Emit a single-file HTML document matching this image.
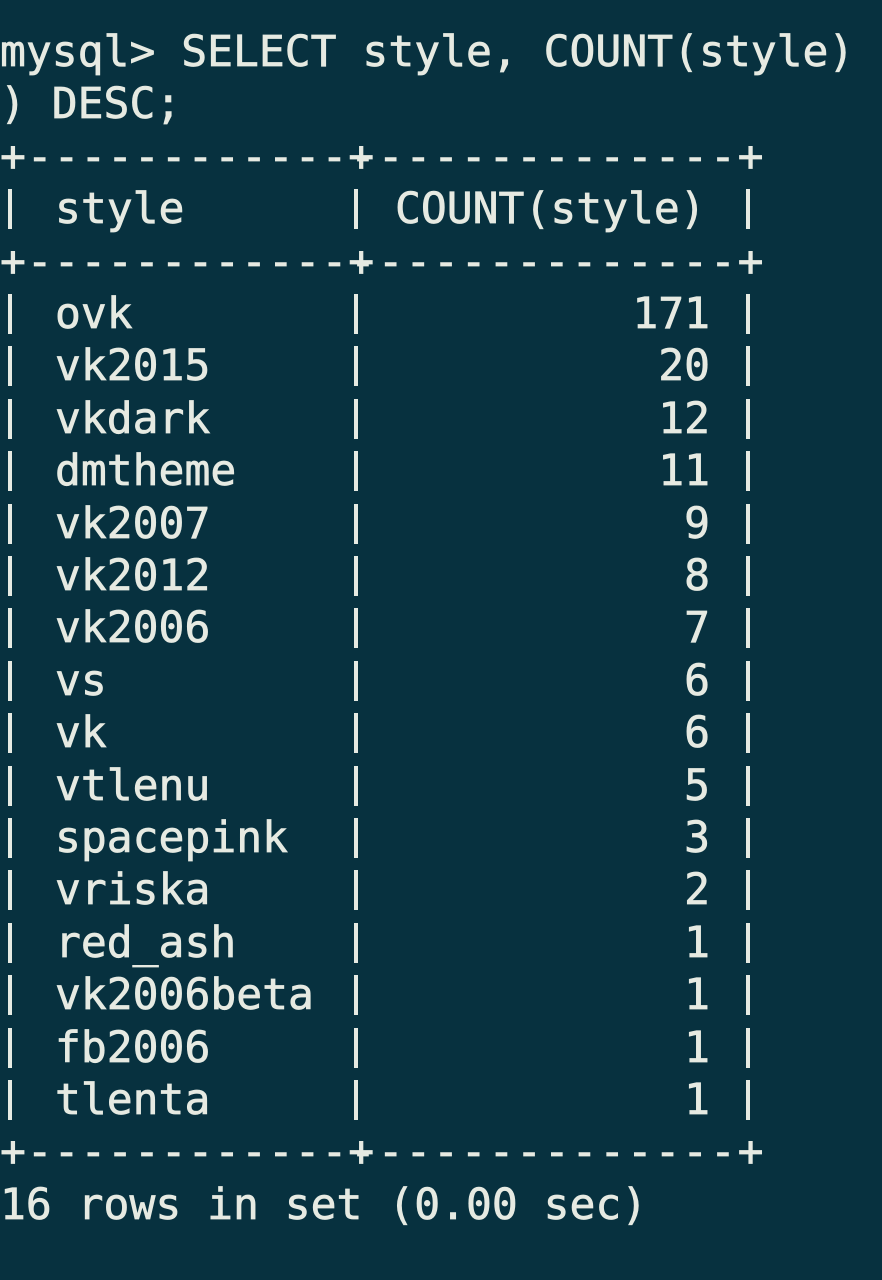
<!DOCTYPE html>
<html><head><meta charset="utf-8"><style>
html,body{margin:0;padding:0;background:#07313f;}
body{width:882px;height:1280px;position:relative;overflow:hidden;font-family:"DejaVu Sans Mono","Liberation Mono",monospace;font-size:43px;color:#e6eae2;-webkit-text-stroke:0.7px #e6eae2;}
.l{position:absolute;left:0;height:52.4px;line-height:52.4px;white-space:pre;width:882px;}
.l span{position:absolute;top:0;}
.l span.n{left:55px}
.l span.c{right:172px}
.b{position:absolute;width:4px;background:#e6eae2;height:40px;top:6px;}
.b1{left:8px}.b2{left:354px}.b3{left:746px}
.d1{left:0;letter-spacing:0.9px}.d2{left:350px;letter-spacing:1.8px}
</style></head><body>
<div class="l" style="top:26px"><span style="left:0">mysql&gt; SELECT style, COUNT(style)</span></div>
<div class="l" style="top:78.4px"><span style="left:0">) DESC;</span></div>
<div class="l" style="top:130.8px"><span class="d1">+------------+</span><span class="d2">--------------+</span></div>
<div class="l" style="top:183.2px"><i class="b b1"></i><i class="b b2"></i><i class="b b3"></i><span class="n">style</span><span style="left:395px">COUNT(style)</span></div>
<div class="l" style="top:235.6px"><span class="d1">+------------+</span><span class="d2">--------------+</span></div>
<div class="l" style="top:288px"><i class="b b1"></i><i class="b b2"></i><i class="b b3"></i><span class="n">ovk</span><span class="c">171</span></div>
<div class="l" style="top:340.4px"><i class="b b1"></i><i class="b b2"></i><i class="b b3"></i><span class="n">vk2015</span><span class="c">20</span></div>
<div class="l" style="top:392.8px"><i class="b b1"></i><i class="b b2"></i><i class="b b3"></i><span class="n">vkdark</span><span class="c">12</span></div>
<div class="l" style="top:445.2px"><i class="b b1"></i><i class="b b2"></i><i class="b b3"></i><span class="n">dmtheme</span><span class="c">11</span></div>
<div class="l" style="top:497.6px"><i class="b b1"></i><i class="b b2"></i><i class="b b3"></i><span class="n">vk2007</span><span class="c">9</span></div>
<div class="l" style="top:550px"><i class="b b1"></i><i class="b b2"></i><i class="b b3"></i><span class="n">vk2012</span><span class="c">8</span></div>
<div class="l" style="top:602.4px"><i class="b b1"></i><i class="b b2"></i><i class="b b3"></i><span class="n">vk2006</span><span class="c">7</span></div>
<div class="l" style="top:654.8px"><i class="b b1"></i><i class="b b2"></i><i class="b b3"></i><span class="n">vs</span><span class="c">6</span></div>
<div class="l" style="top:707.2px"><i class="b b1"></i><i class="b b2"></i><i class="b b3"></i><span class="n">vk</span><span class="c">6</span></div>
<div class="l" style="top:759.6px"><i class="b b1"></i><i class="b b2"></i><i class="b b3"></i><span class="n">vtlenu</span><span class="c">5</span></div>
<div class="l" style="top:812px"><i class="b b1"></i><i class="b b2"></i><i class="b b3"></i><span class="n">spacepink</span><span class="c">3</span></div>
<div class="l" style="top:864.4px"><i class="b b1"></i><i class="b b2"></i><i class="b b3"></i><span class="n">vriska</span><span class="c">2</span></div>
<div class="l" style="top:916.8px"><i class="b b1"></i><i class="b b2"></i><i class="b b3"></i><span class="n">red_ash</span><span class="c">1</span></div>
<div class="l" style="top:969.2px"><i class="b b1"></i><i class="b b2"></i><i class="b b3"></i><span class="n">vk2006beta</span><span class="c">1</span></div>
<div class="l" style="top:1021.6px"><i class="b b1"></i><i class="b b2"></i><i class="b b3"></i><span class="n">fb2006</span><span class="c">1</span></div>
<div class="l" style="top:1074px"><i class="b b1"></i><i class="b b2"></i><i class="b b3"></i><span class="n">tlenta</span><span class="c">1</span></div>
<div class="l" style="top:1126.4px"><span class="d1">+------------+</span><span class="d2">--------------+</span></div>
<div class="l" style="top:1178.8px"><span style="left:0">16 rows in set (0.00 sec)</span></div>
</body></html>
